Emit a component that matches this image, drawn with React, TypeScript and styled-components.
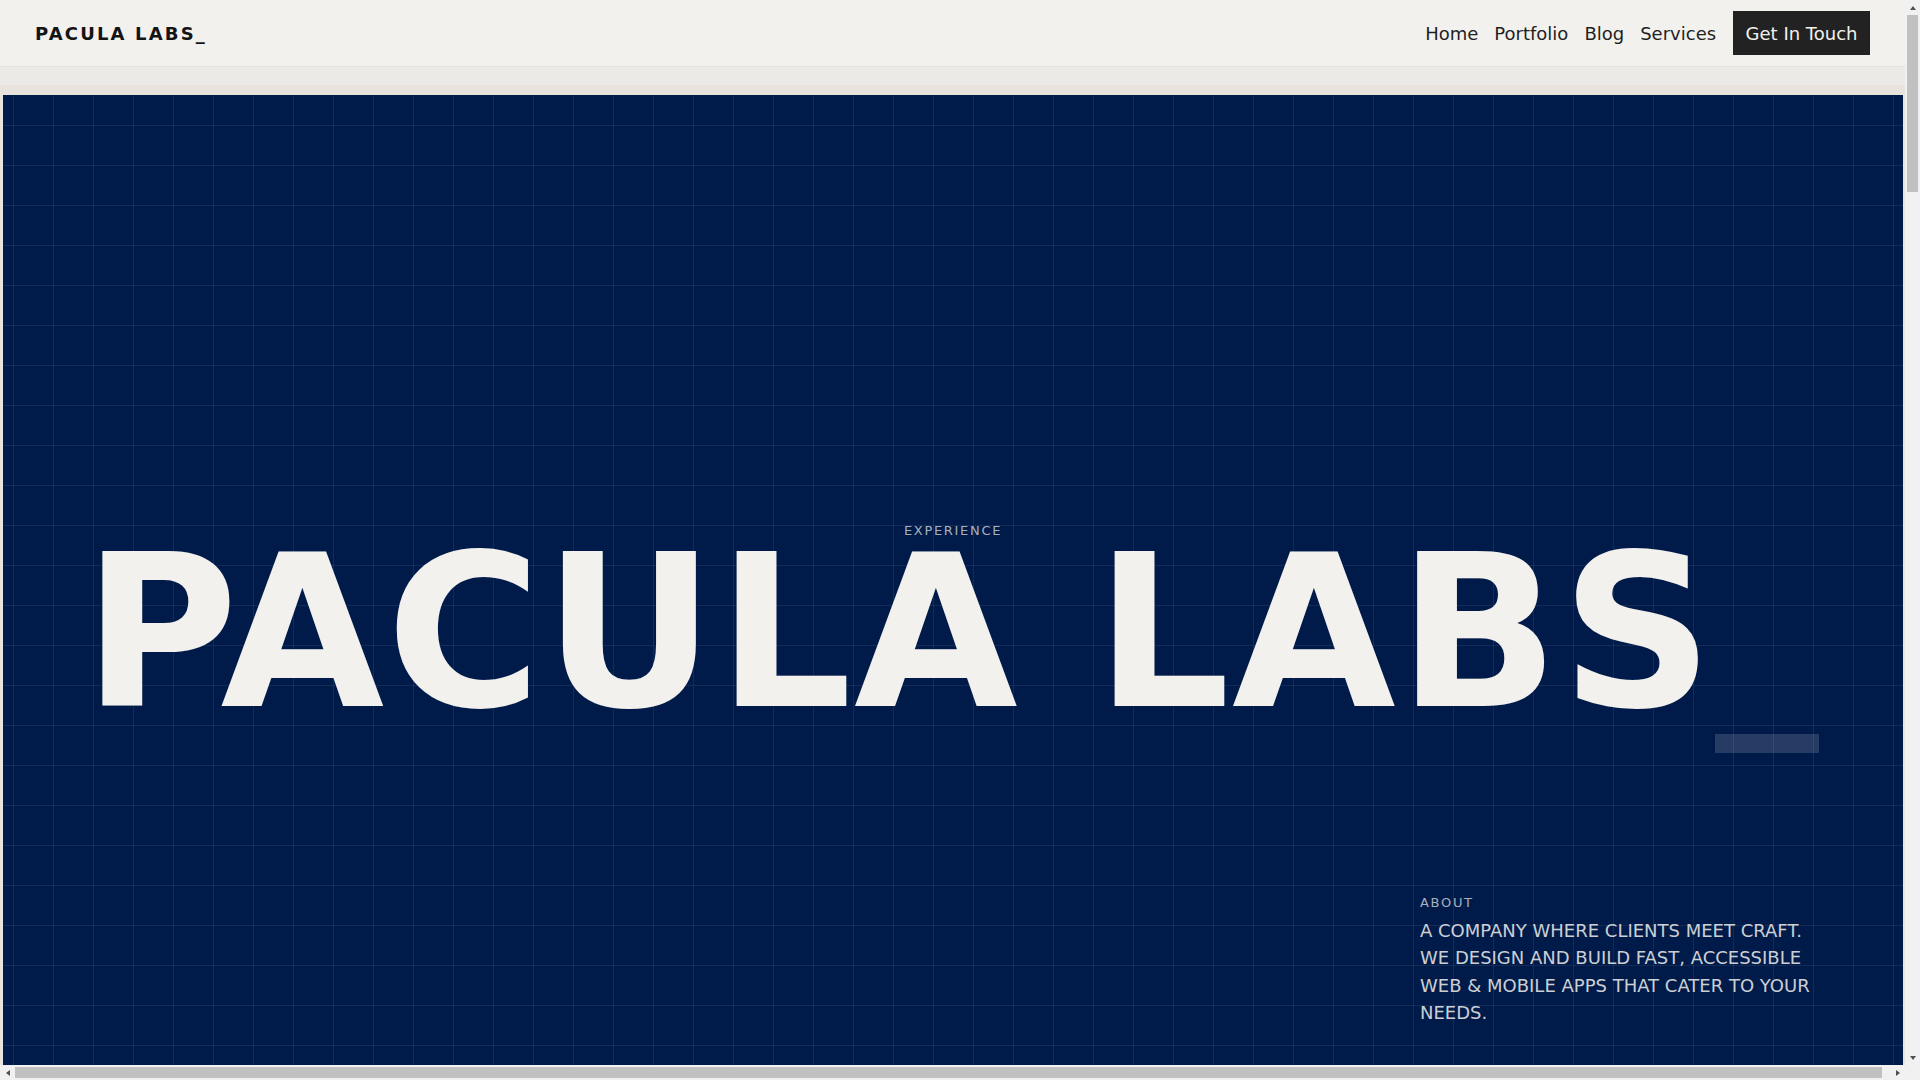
import React from "react";
import styled, { createGlobalStyle } from "styled-components";

const GlobalStyle = createGlobalStyle`
  *, *::before, *::after { box-sizing: border-box; }
  html, body { margin: 0; padding: 0; height: 100%; overflow: hidden; }
  body {
    background: #e8e4dd;
    color: #1c1c1c;
    font-family: "DejaVu Sans", Verdana, sans-serif;
  }
`;

/* ---------- frame: viewport + scrollbars ---------- */

const Frame = styled.div`
  width: 100vw;
  height: 100vh;
  display: grid;
  grid-template-columns: 1fr 15px;
  grid-template-rows: 1fr 15px;
  background: #f1f1f1;
`;

const Viewport = styled.div`
  min-width: 0;
  min-height: 0;
  overflow: hidden;
  display: flex;
  flex-direction: column;
  background: #e8e4dd;
`;

const ScrollTrack = styled.div<{ $dir: "v" | "h" }>`
  display: flex;
  flex-direction: ${(p) => (p.$dir === "v" ? "column" : "row")};
  background: #f1f1f1;
`;

const ScrollButton = styled.div`
  flex: none;
  width: 15px;
  height: 15px;
  display: flex;
  align-items: center;
  justify-content: center;
`;

const Arrow = styled.span<{ $to: "up" | "down" | "left" | "right" }>`
  width: 0;
  height: 0;
  border-style: solid;
  border-color: transparent;
  ${(p) =>
    p.$to === "up"
      ? "border-width: 0 3.5px 4px; border-bottom-color: #505050;"
      : p.$to === "down"
      ? "border-width: 4px 3.5px 0; border-top-color: #505050;"
      : p.$to === "left"
      ? "border-width: 3.5px 4px 3.5px 0; border-right-color: #505050;"
      : "border-width: 3.5px 0 3.5px 4px; border-left-color: #505050;"}
`;

const ScrollSpace = styled.div<{ $dir: "v" | "h" }>`
  flex: 1;
  display: flex;
  flex-direction: ${(p) => (p.$dir === "v" ? "column" : "row")};
  padding: ${(p) => (p.$dir === "v" ? "0 2px" : "2px 0")};
`;

const Thumb = styled.div<{ $dir: "v" | "h"; $size: number }>`
  flex: none;
  ${(p) => (p.$dir === "v" ? `height: ${p.$size}px;` : `width: ${p.$size}px;`)}
  background: #c1c1c1;
`;

const Corner = styled.div`
  background: #f1f1f1;
`;

/* ---------- page ---------- */

const Nav = styled.header`
  flex: none;
  height: 67px;
  display: flex;
  align-items: center;
  justify-content: space-between;
  padding: 0 35px;
  background: #f2f1ed;
  border-bottom: 1px solid #e6e4df;
`;

const Logo = styled.a`
  font-size: 18px;
  font-weight: 700;
  letter-spacing: 0.12em;
  color: #141414;
  text-decoration: none;
`;

const NavLinks = styled.nav`
  display: flex;
  align-items: center;
  gap: 16px;
`;

const NavLink = styled.a`
  font-size: 18px;
  color: #1f1f1f;
  text-decoration: none;
`;

const ContactButton = styled.a`
  display: inline-flex;
  align-items: center;
  height: 44px;
  margin-left: 1px;
  padding: 0 12.5px;
  background: #222222;
  color: #f2f1ed;
  font-size: 18px;
  text-decoration: none;
`;

const Main = styled.main`
  flex: none;
  display: flex;
  flex-direction: column;
  padding-top: 28px;
  background: linear-gradient(to bottom, #ebeae6 0, #ebeae6 18px, #e8e4dd 18px);
`;

const Hero = styled.section`
  margin: 0 2px 0 3px;
  height: 980px;
  display: flex;
  flex-direction: column;
  padding: 428px 80px 48px;
  background-color: #001b4a;
  background-image:
    linear-gradient(to right, rgba(255, 255, 255, 0.07) 1px, transparent 1px),
    linear-gradient(to bottom, rgba(255, 255, 255, 0.07) 1px, transparent 1px);
  background-size: 40px 40px;
  background-position: center;
`;

const Eyebrow = styled.span<{ $align?: string }>`
  display: block;
  align-self: ${(p) => p.$align ?? "flex-start"};
  font-size: 13px;
  letter-spacing: 0.13em;
  color: rgba(242, 241, 237, 0.7);
`;

const Title = styled.h1`
  margin: 0;
  font-size: 211.5px;
  font-weight: 700;
  line-height: 0.9;
  letter-spacing: 2px;
  color: #f2f1ed;
  white-space: nowrap;
`;

const Cursor = styled.span`
  display: inline-block;
  width: 104px;
  height: 19px;
  background: rgba(255, 255, 255, 0.15);
  vertical-align: -47px;
`;

const About = styled.div`
  margin-top: auto;
  align-self: flex-end;
  width: 403px;
  display: flex;
  flex-direction: column;
  gap: 7px;
`;

const AboutText = styled.p`
  margin: 0;
  font-size: 18px;
  line-height: 27.6px;
  color: rgba(242, 241, 237, 0.85);
`;

const Section = styled.section<{ $bg: string }>`
  flex: none;
  min-height: 900px;
  padding: 120px 80px;
  background: ${(p) => p.$bg};
  display: flex;
  flex-direction: column;
  gap: 24px;
`;

const SectionTitle = styled.h2`
  margin: 0;
  font-size: 64px;
  font-weight: 700;
  color: #111;
`;

const SectionText = styled.p`
  margin: 0;
  max-width: 600px;
  font-size: 18px;
  line-height: 1.6;
  color: #333;
`;

const sections = [
  { title: "Portfolio", text: "Selected work across web and mobile.", bg: "#e8e4dd" },
  { title: "Services", text: "Design, development and ongoing support.", bg: "#f2f1ed" },
  { title: "Blog", text: "Notes on craft, accessibility and performance.", bg: "#e8e4dd" },
  { title: "Get In Touch", text: "Tell us about your project.", bg: "#f2f1ed" },
];

export default function App() {
  return (
    <Frame>
      <GlobalStyle />
      <Viewport>
        <Nav>
          <Logo href="#">PACULA LABS_</Logo>
          <NavLinks>
            <NavLink href="#">Home</NavLink>
            <NavLink href="#">Portfolio</NavLink>
            <NavLink href="#">Blog</NavLink>
            <NavLink href="#">Services</NavLink>
            <ContactButton href="#">Get In Touch</ContactButton>
          </NavLinks>
        </Nav>
        <Main>
          <Hero>
            <Eyebrow $align="center">EXPERIENCE</Eyebrow>
            <Title>
              PACULA LABS<Cursor />
            </Title>
            <About>
              <Eyebrow>ABOUT</Eyebrow>
              <AboutText>
                A COMPANY WHERE CLIENTS MEET CRAFT. WE DESIGN AND BUILD FAST, ACCESSIBLE WEB &amp; MOBILE APPS THAT CATER TO YOUR NEEDS.
              </AboutText>
            </About>
          </Hero>
          {sections.map((s) => (
            <Section key={s.title} $bg={s.bg}>
              <SectionTitle>{s.title}</SectionTitle>
              <SectionText>{s.text}</SectionText>
            </Section>
          ))}
        </Main>
      </Viewport>
      <ScrollTrack $dir="v">
        <ScrollButton>
          <Arrow $to="up" />
        </ScrollButton>
        <ScrollSpace $dir="v">
          <Thumb $dir="v" $size={177} />
        </ScrollSpace>
        <ScrollButton>
          <Arrow $to="down" />
        </ScrollButton>
      </ScrollTrack>
      <ScrollTrack $dir="h">
        <ScrollButton>
          <Arrow $to="left" />
        </ScrollButton>
        <ScrollSpace $dir="h">
          <Thumb $dir="h" $size={1867} />
        </ScrollSpace>
        <ScrollButton>
          <Arrow $to="right" />
        </ScrollButton>
      </ScrollTrack>
      <Corner />
    </Frame>
  );
}
